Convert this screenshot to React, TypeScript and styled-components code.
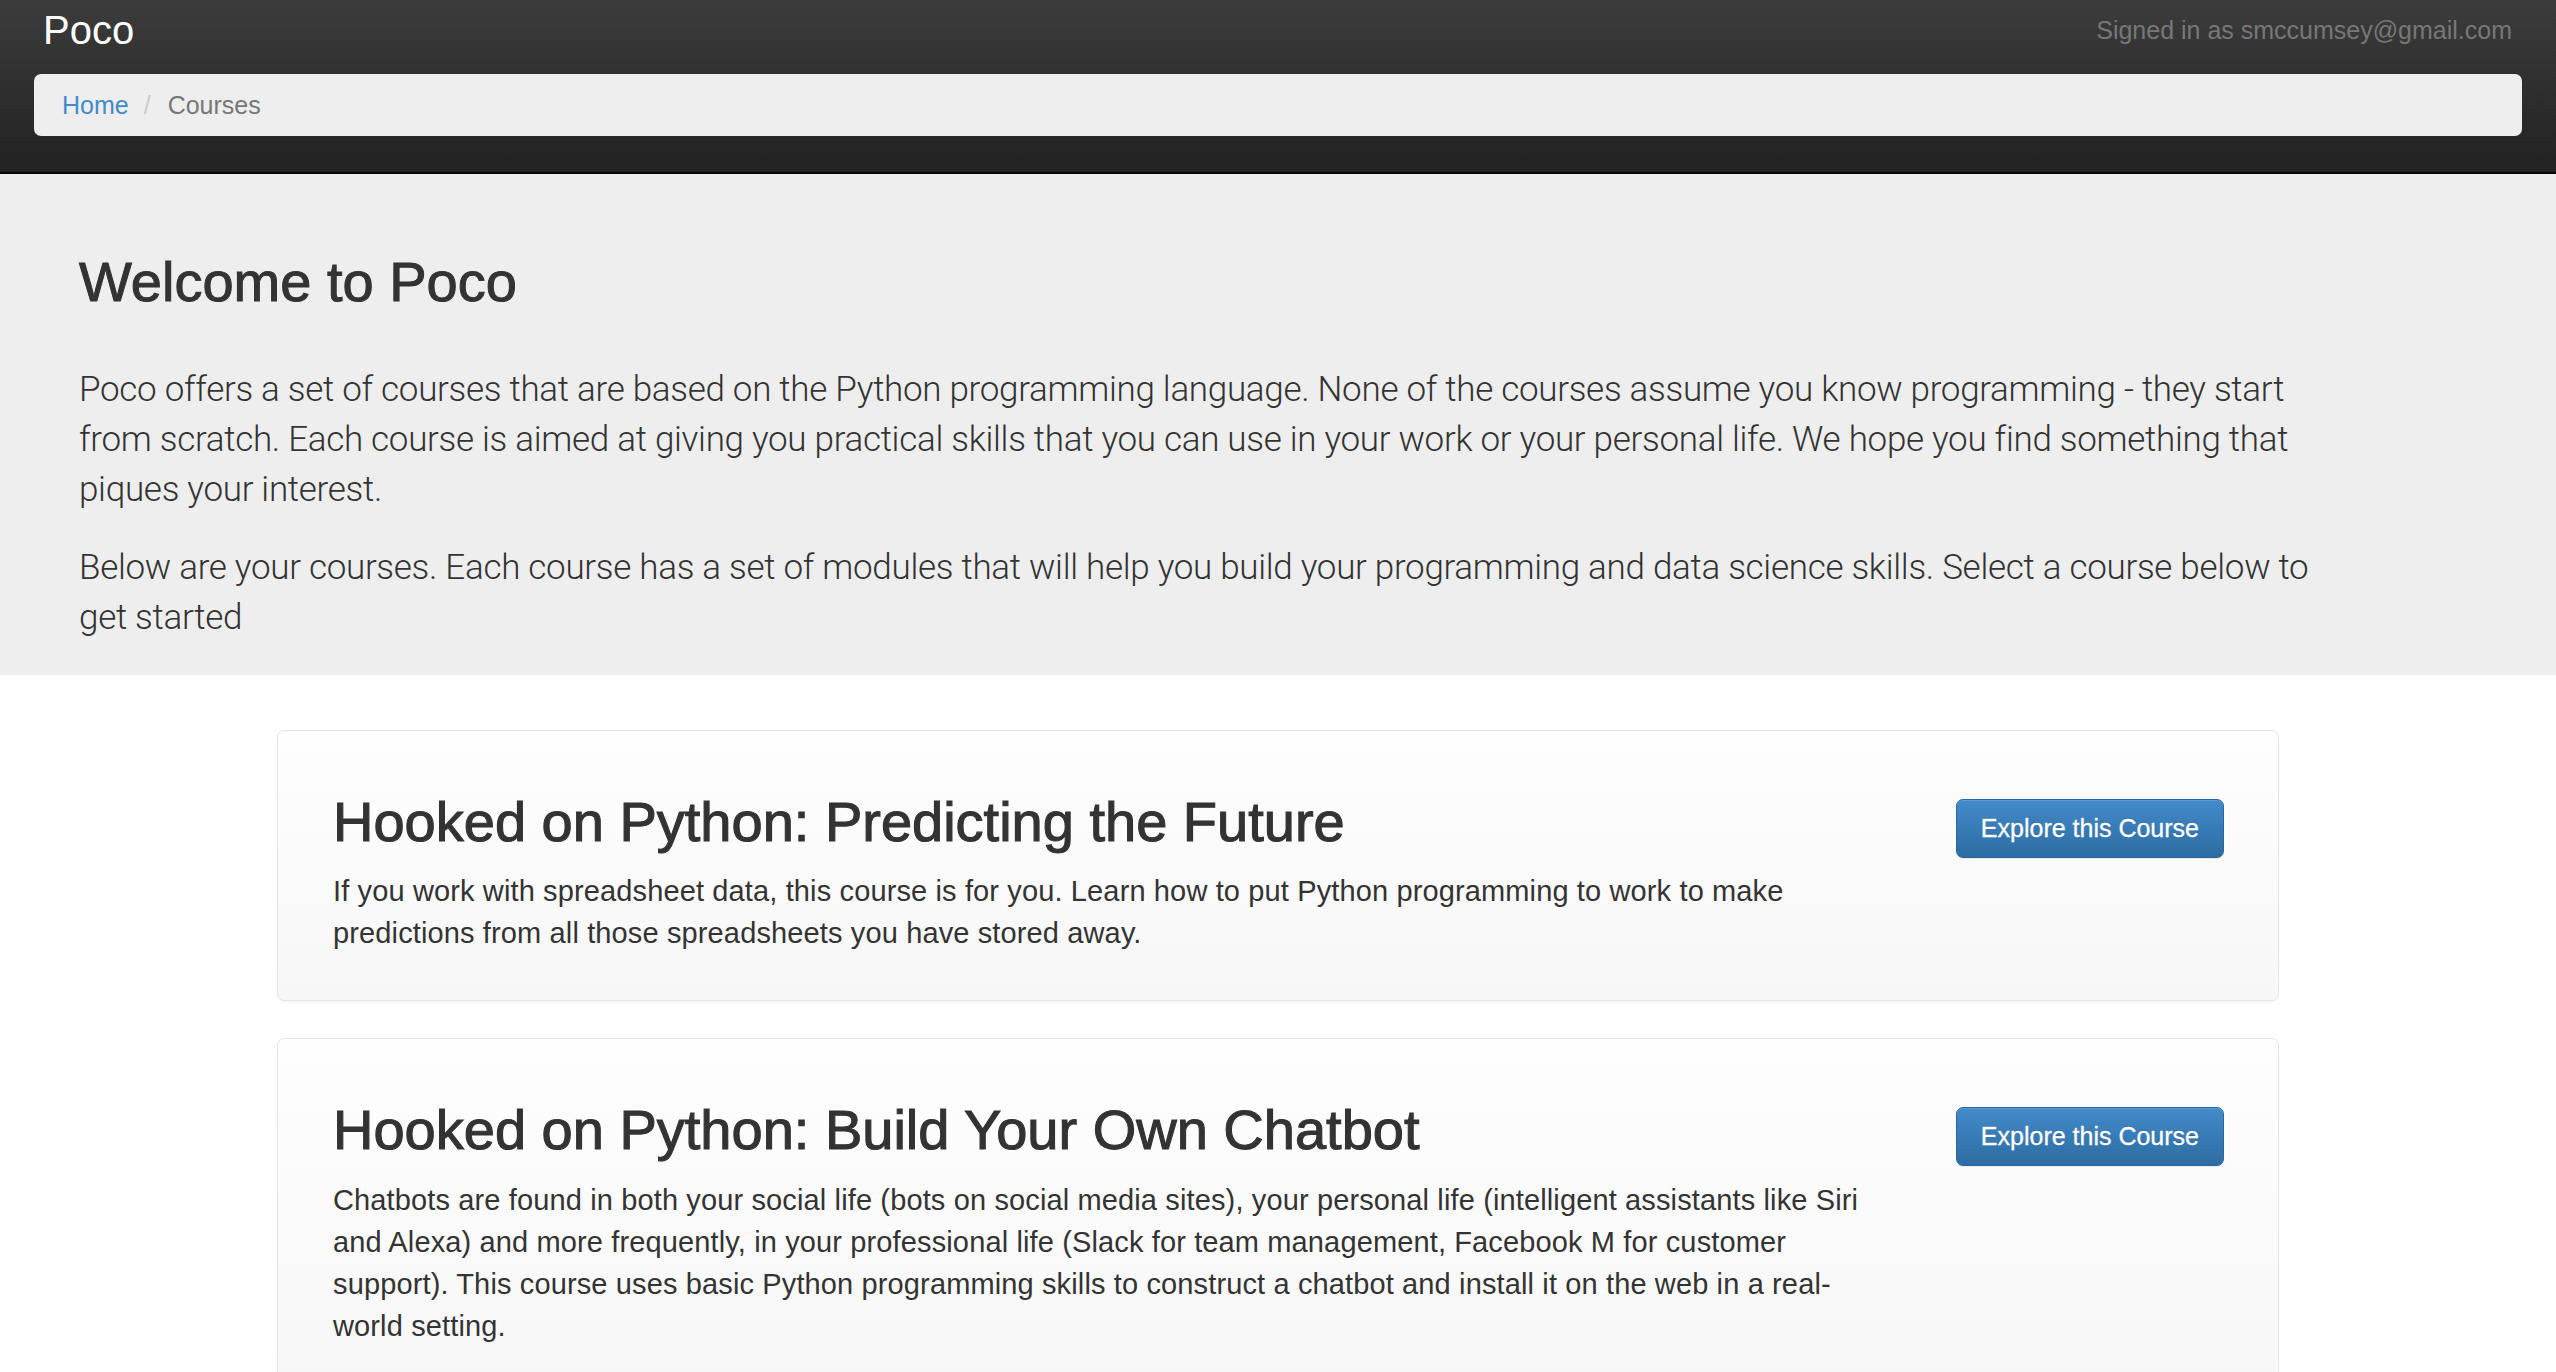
import React from 'react';
import styled, { createGlobalStyle } from 'styled-components';

const courses = [
  {
    id: 'predict',
    title: 'Hooked on Python: Predicting the Future',
    text: 'If you work with spreadsheet data, this course is for you. Learn how to put Python programming to work to make predictions from all those spreadsheets you have stored away.',
  },
  {
    id: 'chatbot',
    title: 'Hooked on Python: Build Your Own Chatbot',
    text: 'Chatbots are found in both your social life (bots on social media sites), your personal life (intelligent assistants like Siri and Alexa) and more frequently, in your professional life (Slack for team management, Facebook M for customer support). This course uses basic Python programming skills to construct a chatbot and install it on the web in a real-world setting.',
  },
];

const App = () => {
  return (
    <>
      <GlobalStyle />
      <Navbar>
        <TopRow>
          <Brand>Poco</Brand>
          <SignedIn>Signed in as smccumsey@gmail.com</SignedIn>
        </TopRow>
        <Breadcrumb>
          <Crumb href="#">Home</Crumb>
          <Separator>/</Separator>
          <Current>Courses</Current>
        </Breadcrumb>
      </Navbar>

      <Jumbotron>
        <h1>Welcome to Poco</h1>
        <p>
          Poco offers a set of courses that are based on the Python programming language. None of the
          courses assume you know programming - they start from scratch. Each course is aimed at giving
          you practical skills that you can use in your work or your personal life. We hope you find
          something that piques your interest.
        </p>
        <p>
          Below are your courses. Each course has a set of modules that will help you build your
          programming and data science skills. Select a course below to get started
        </p>
      </Jumbotron>

      <CourseList>
        {courses.map(c => (
          <Card key={c.id}>
            <CardBody>
              <CourseTitle>{c.title}</CourseTitle>
              <CourseText>{c.text}</CourseText>
            </CardBody>
            <ExploreButton type="button">Explore this Course</ExploreButton>
          </Card>
        ))}
      </CourseList>
    </>
  );
};

export default App;

const GlobalStyle = createGlobalStyle`
  html, body {
    margin: 0;
    padding: 0;
    background: #fff;
  }
  body {
    font-family: "Liberation Sans", Arial, Helvetica, sans-serif;
    color: #333;
  }
  * {
    box-sizing: border-box;
  }
`;

const Navbar = styled.header`
  display: flex;
  flex-direction: column;
  background: linear-gradient(to bottom, #3c3c3c 0, #222 100%);
  border-bottom: 2px solid #080808;
  padding-bottom: 36px;
`;

const TopRow = styled.div`
  display: flex;
  justify-content: space-between;
  align-items: flex-start;
  height: 60px;
  padding: 0 44px 0 43px;
`;

const Brand = styled.div`
  font-size: 40px;
  line-height: 60px;
  color: #fff;
`;

const SignedIn = styled.div`
  font-size: 25px;
  line-height: 60px;
  color: #777;
`;

const Breadcrumb = styled.nav`
  display: flex;
  align-items: center;
  margin: 14px 34px 0;
  height: 62px;
  padding: 0 28px;
  background: #eee;
  border-radius: 7px;
  font-size: 25px;
`;

const Crumb = styled.a`
  color: #428bca;
  text-decoration: none;
`;

const Separator = styled.span`
  padding: 0 17px 0 15px;
  color: #ccc;
`;

const Current = styled.span`
  color: #777;
`;

const Jumbotron = styled.section`
  background: #eee;
  padding: 77px 79px 32px;

  h1 {
    margin: 0 0 52px;
    font-size: 56px;
    line-height: 1.1;
    font-weight: 400;
    color: #333;
    -webkit-text-stroke: 1px #333;
  }

  p {
    max-width: 2262px;
    margin: 0 0 28px;
    font-family: Roboto, "Liberation Sans", sans-serif;
    font-weight: 300;
    font-size: 35px;
    line-height: 50px;
    letter-spacing: -0.3px;
    color: #333;
  }

  p:last-child {
    margin-bottom: 0;
  }
`;

const CourseList = styled.main`
  display: flex;
  flex-direction: column;
  gap: 37px;
  width: 2002px;
  margin: 55px auto 0;
`;

const Card = styled.article`
  display: flex;
  justify-content: space-between;
  align-items: flex-start;
  padding: 60px 54px 46px 55px;
  background: linear-gradient(to bottom, #fefefe 0, #f7f7f7 100%);
  border: 1px solid #e6e6e6;
  border-radius: 7px;
  box-shadow: 0 1px 2px rgba(0, 0, 0, 0.05);
`;

const CardBody = styled.div`
  width: 1545px;
`;

const CourseTitle = styled.h2`
  margin: 0 0 18px;
  font-size: 56px;
  line-height: 1.1;
  font-weight: 400;
  color: #333;
  -webkit-text-stroke: 1.1px #333;
`;

const CourseText = styled.p`
  margin: 0;
  font-size: 29px;
  line-height: 42px;
  letter-spacing: 0.13px;
  color: #333;
`;

const ExploreButton = styled.button`
  margin-top: 8px;
  height: 59px;
  padding: 0 24px;
  font-family: "Liberation Sans", Arial, sans-serif;
  font-size: 25px;
  color: #fff;
  -webkit-text-stroke: 0.3px #fff;
  text-shadow: 0 -1px 0 rgba(0, 0, 0, 0.2);
  background: linear-gradient(to bottom, #428bca 0, #2d6ca2 100%);
  border: 1px solid #2b669a;
  border-radius: 7px;
  box-shadow: inset 0 1px 0 rgba(255, 255, 255, 0.15), 0 1px 1px rgba(0, 0, 0, 0.075);
  cursor: pointer;
  white-space: nowrap;
`;
